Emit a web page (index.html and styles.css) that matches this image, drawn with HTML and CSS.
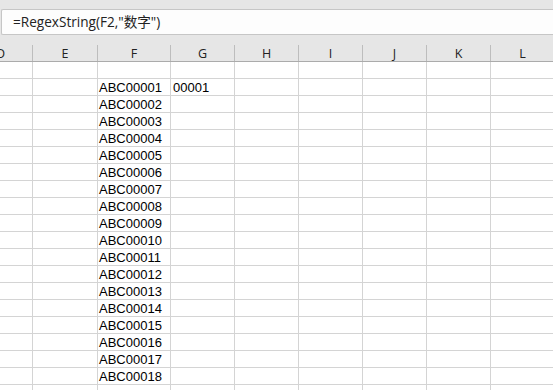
FILE: index.html
```html
<!DOCTYPE html>
<html lang="en">
<head>
    <meta charset="UTF-8">
    <title>RegexString</title>
    <link rel="stylesheet" href="styles.css">
</head>
<body>
    <div class="formula-bar">=RegexString(F2,"数字")</div>
    <div class="sheet">
        <div class="row head-row">
            <div class="cell">D</div>
            <div class="cell col-e">E</div>
            <div class="cell col-f">F</div>
            <div class="cell">G</div>
            <div class="cell">H</div>
            <div class="cell">I</div>
            <div class="cell">J</div>
            <div class="cell">K</div>
            <div class="cell">L</div>
        </div>
        <div class="row"><div class="cell"></div><div class="cell col-e"></div><div class="cell col-f"></div><div class="cell"></div><div class="cell"></div><div class="cell"></div><div class="cell"></div><div class="cell"></div><div class="cell"></div></div>
        <div class="row"><div class="cell"></div><div class="cell col-e"></div><div class="cell col-f">ABC00001</div><div class="cell">00001</div><div class="cell"></div><div class="cell"></div><div class="cell"></div><div class="cell"></div><div class="cell"></div></div>
        <div class="row"><div class="cell"></div><div class="cell col-e"></div><div class="cell col-f">ABC00002</div><div class="cell"></div><div class="cell"></div><div class="cell"></div><div class="cell"></div><div class="cell"></div><div class="cell"></div></div>
        <div class="row"><div class="cell"></div><div class="cell col-e"></div><div class="cell col-f">ABC00003</div><div class="cell"></div><div class="cell"></div><div class="cell"></div><div class="cell"></div><div class="cell"></div><div class="cell"></div></div>
        <div class="row"><div class="cell"></div><div class="cell col-e"></div><div class="cell col-f">ABC00004</div><div class="cell"></div><div class="cell"></div><div class="cell"></div><div class="cell"></div><div class="cell"></div><div class="cell"></div></div>
        <div class="row"><div class="cell"></div><div class="cell col-e"></div><div class="cell col-f">ABC00005</div><div class="cell"></div><div class="cell"></div><div class="cell"></div><div class="cell"></div><div class="cell"></div><div class="cell"></div></div>
        <div class="row"><div class="cell"></div><div class="cell col-e"></div><div class="cell col-f">ABC00006</div><div class="cell"></div><div class="cell"></div><div class="cell"></div><div class="cell"></div><div class="cell"></div><div class="cell"></div></div>
        <div class="row"><div class="cell"></div><div class="cell col-e"></div><div class="cell col-f">ABC00007</div><div class="cell"></div><div class="cell"></div><div class="cell"></div><div class="cell"></div><div class="cell"></div><div class="cell"></div></div>
        <div class="row"><div class="cell"></div><div class="cell col-e"></div><div class="cell col-f">ABC00008</div><div class="cell"></div><div class="cell"></div><div class="cell"></div><div class="cell"></div><div class="cell"></div><div class="cell"></div></div>
        <div class="row"><div class="cell"></div><div class="cell col-e"></div><div class="cell col-f">ABC00009</div><div class="cell"></div><div class="cell"></div><div class="cell"></div><div class="cell"></div><div class="cell"></div><div class="cell"></div></div>
        <div class="row"><div class="cell"></div><div class="cell col-e"></div><div class="cell col-f">ABC00010</div><div class="cell"></div><div class="cell"></div><div class="cell"></div><div class="cell"></div><div class="cell"></div><div class="cell"></div></div>
        <div class="row"><div class="cell"></div><div class="cell col-e"></div><div class="cell col-f">ABC00011</div><div class="cell"></div><div class="cell"></div><div class="cell"></div><div class="cell"></div><div class="cell"></div><div class="cell"></div></div>
        <div class="row"><div class="cell"></div><div class="cell col-e"></div><div class="cell col-f">ABC00012</div><div class="cell"></div><div class="cell"></div><div class="cell"></div><div class="cell"></div><div class="cell"></div><div class="cell"></div></div>
        <div class="row"><div class="cell"></div><div class="cell col-e"></div><div class="cell col-f">ABC00013</div><div class="cell"></div><div class="cell"></div><div class="cell"></div><div class="cell"></div><div class="cell"></div><div class="cell"></div></div>
        <div class="row"><div class="cell"></div><div class="cell col-e"></div><div class="cell col-f">ABC00014</div><div class="cell"></div><div class="cell"></div><div class="cell"></div><div class="cell"></div><div class="cell"></div><div class="cell"></div></div>
        <div class="row"><div class="cell"></div><div class="cell col-e"></div><div class="cell col-f">ABC00015</div><div class="cell"></div><div class="cell"></div><div class="cell"></div><div class="cell"></div><div class="cell"></div><div class="cell"></div></div>
        <div class="row"><div class="cell"></div><div class="cell col-e"></div><div class="cell col-f">ABC00016</div><div class="cell"></div><div class="cell"></div><div class="cell"></div><div class="cell"></div><div class="cell"></div><div class="cell"></div></div>
        <div class="row"><div class="cell"></div><div class="cell col-e"></div><div class="cell col-f">ABC00017</div><div class="cell"></div><div class="cell"></div><div class="cell"></div><div class="cell"></div><div class="cell"></div><div class="cell"></div></div>
        <div class="row"><div class="cell"></div><div class="cell col-e"></div><div class="cell col-f">ABC00018</div><div class="cell"></div><div class="cell"></div><div class="cell"></div><div class="cell"></div><div class="cell"></div><div class="cell"></div></div>
        <div class="row"><div class="cell"></div><div class="cell col-e"></div><div class="cell col-f"></div><div class="cell"></div><div class="cell"></div><div class="cell"></div><div class="cell"></div><div class="cell"></div><div class="cell"></div></div>
    </div>
</body>
</html>
```

FILE: styles.css
```css
/* Base */
html, body {
    margin: 0;
    padding: 0;
    height: 100%;
    background-color: #e6e6e6;
    overflow: hidden;
}

body {
    padding-top: 9px;
    box-sizing: border-box;
}

.formula-bar {
    margin-left: 1px;
    height: 26px;
    box-sizing: border-box;
    border: 1px solid #c6c6c6;
    border-right: none;
    border-radius: 2px 0 0 2px;
    background-color: #fdfdfd;
    padding-left: 11px;
    line-height: 24px;
    font-family: "Open Sans", "Noto Sans CJK SC", sans-serif;
    font-size: 13.6px;
    color: #222;
    white-space: nowrap;
}

/* Sheet, scrolled so column D is mostly hidden */
.sheet {
    display: flex;
    flex-direction: column;
    margin-left: -31px;
    font-family: "Liberation Sans", Arial, sans-serif;
    font-size: 13px;
    color: #000;
}

.row {
    display: flex;
    flex-shrink: 0;
    background-color: #fff;
}

.cell {
    flex: 0 0 64px;
    width: 64px;
    height: 17px;
    box-sizing: border-box;
    border-right: 1px solid #d4d4d4;
    border-bottom: 1px solid #d4d4d4;
    padding-left: 2px;
    line-height: 17px;
    white-space: nowrap;
    overflow: hidden;
}

.cell.col-e {
    flex-basis: 65px;
    width: 65px;
}

.cell.col-f {
    flex-basis: 73px;
    width: 73px;
    padding-left: 1px;
}

/* Column headers */
.head-row {
    background-color: #e6e6e6;
    padding-top: 10px;
    border-bottom: 1px solid #ababab;
}

.head-row .cell {
    height: 16px;
    line-height: 17px;
    border-bottom: none;
    border-right-color: #bdbdbd;
    padding-left: 0;
    text-align: center;
    font-family: "Open Sans", sans-serif;
    font-size: 12.5px;
    color: #222;
}
```
